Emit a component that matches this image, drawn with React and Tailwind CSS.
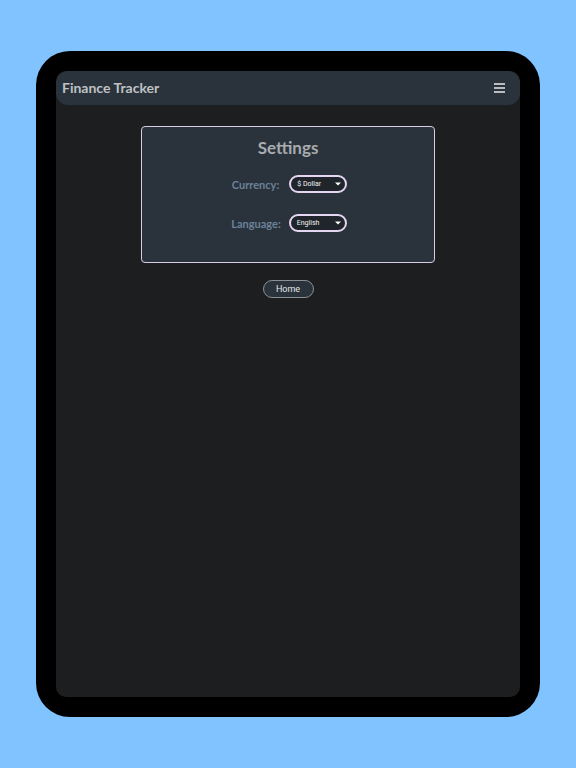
import React from "react";

function Select({ value }) {
  return (
    <div className="flex h-[18px] w-[58px] shrink-0 items-center justify-between rounded-full border-2 border-[#e4d6f0] bg-[#20252b] pl-[6px] pr-[4px]">
      <span className="text-[7px] leading-none text-[#f2f2f2]" style={{ fontFamily: "Roboto, 'Liberation Sans', sans-serif" }}>{value}</span>
      <svg width="6" height="4" viewBox="0 0 6 4"><path d="M0 0.5h6L3 3.5z" fill="#ffffff" /></svg>
    </div>
  );
}

export default function App() {
  return (
    <div className="h-[768px] w-[576px] bg-[#80c3ff] pl-[36px] pt-[51px]" style={{ fontFamily: "Lato, 'Noto Sans', sans-serif" }}>
      <div className="h-[666px] w-[504px] rounded-[34px] bg-black p-[20px]">
        <div className="flex h-full flex-col items-center rounded-[10px] bg-[#1d1e20]">
          <div className="flex h-[34px] w-full shrink-0 items-center justify-between rounded-[12px] bg-[#2a333c] pl-[6px] pr-[15px]">
            <span className="text-[14px] font-bold leading-none text-[#bfc1c4]">Finance Tracker</span>
            <div className="flex w-[11px] flex-col gap-[2px]">
              <div className="h-[2px] bg-[#b9bcbf]" />
              <div className="h-[2px] bg-[#b9bcbf]" />
              <div className="h-[2px] bg-[#b9bcbf]" />
            </div>
          </div>
          <div className="mt-[21px] flex h-[137px] w-[294px] flex-col items-center rounded-[4px] border border-[#d9cde4] bg-[#2a333c] pt-[11px]">
            <div className="text-[17px] font-bold leading-[20px] text-[#a8abae]">Settings</div>
            <div className="ml-[3px] mt-[17px] flex items-center gap-[10px]">
              <span className="text-[11px] font-bold leading-none text-[#6b8299]">Currency:</span>
              <Select value="$ Dollar" />
            </div>
            <div className="ml-[2px] mt-[21px] flex items-center gap-[8px]">
              <span className="text-[11px] font-bold leading-none text-[#6b8299]">Language:</span>
              <Select value="English" />
            </div>
          </div>
          <div className="mt-[17px] flex h-[18px] w-[51px] items-center justify-center rounded-full border border-[#8a9097] bg-[#2a333c]">
            <span className="text-[9px] leading-none text-[#e2e4e6]" style={{ fontFamily: "Roboto, 'Liberation Sans', sans-serif" }}>Home</span>
          </div>
        </div>
      </div>
    </div>
  );
}
